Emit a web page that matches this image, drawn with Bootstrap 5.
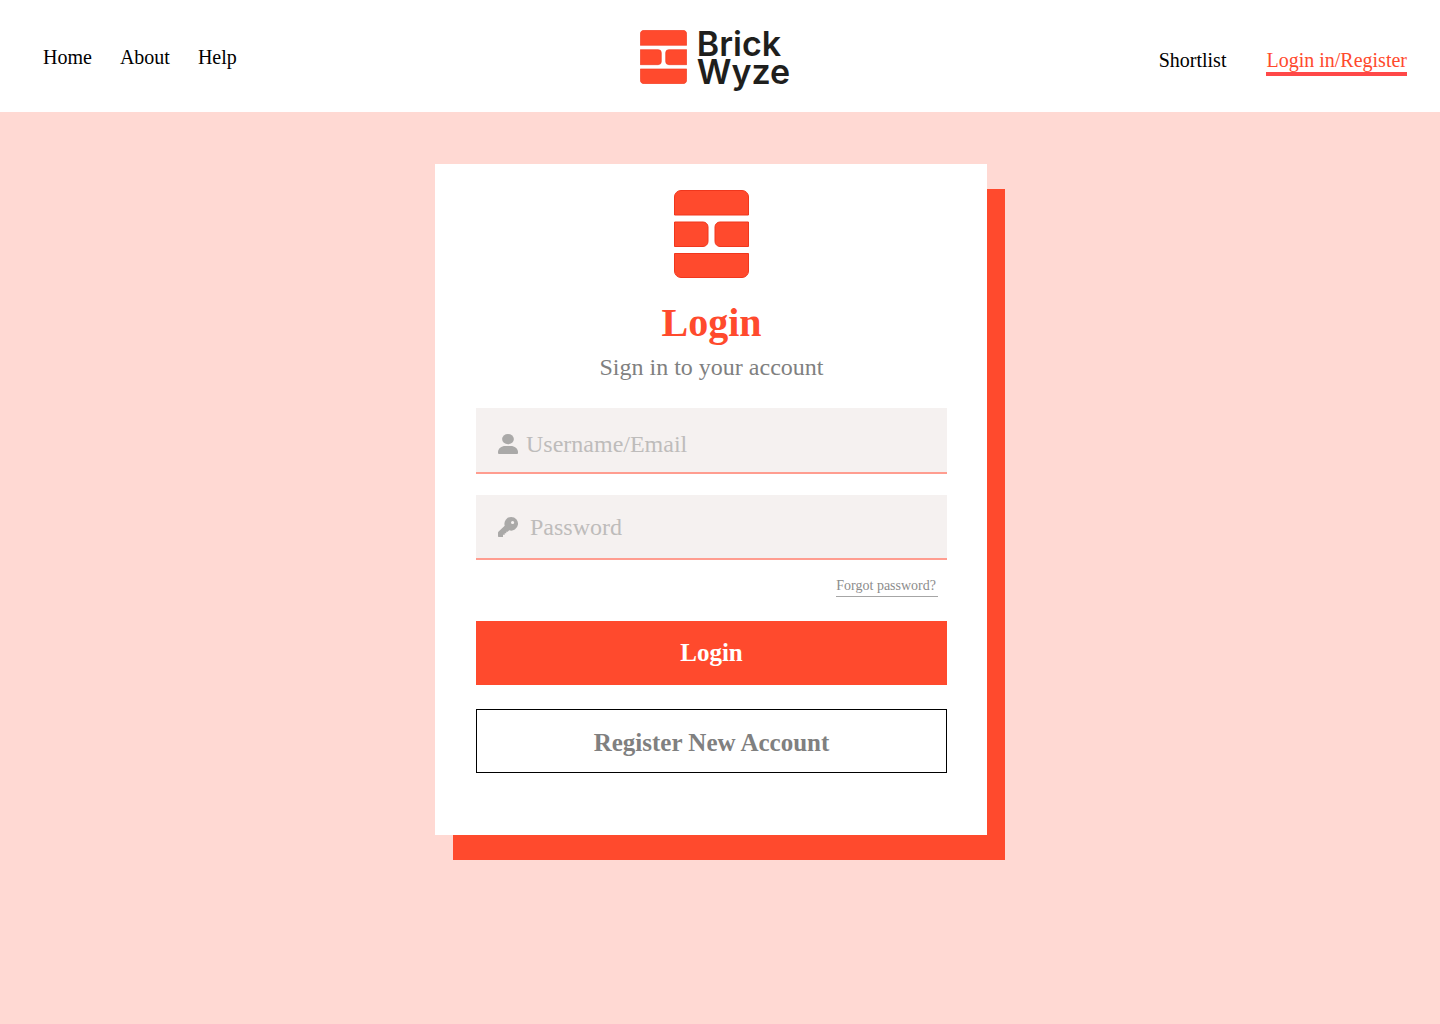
<!DOCTYPE html>
<html lang="en">
<head>
<meta charset="utf-8">
<meta name="viewport" content="width=device-width, initial-scale=1">
<title>Brick Wyze - Login</title>
<link href="https://cdn.jsdelivr.net/npm/bootstrap@5.3.0/dist/css/bootstrap.min.css" rel="stylesheet">
<style>
  :root { --brick: #ff4a2d; --blush: #ffd9d3; }
  body { background: var(--blush); font-family: "Liberation Serif", serif; }
  .site-header { display: grid; grid-template-columns: 1fr auto 1fr; min-height: 112px; padding: 0 33px; }
  .site-header nav a { color: #000; font-size: 20px; line-height: 24px; text-decoration: none; }
  .main-nav { gap: 28px; padding: 45px 0 0 10px; }
  .account-nav { gap: 40px; padding-top: 48px; }
  .site-header nav a.current { color: var(--brick); border-bottom: 4px solid #ff4848; }
  .brand { gap: 10px; margin: 30px 10px 0 0; color: #1f1f1d; font: 600 34px/28px Inter, sans-serif; text-decoration: none; }
  .brand svg { width: 47px; height: 54px; }
  .login-wrap { max-width: 570px; padding-right: 18px; margin-top: 52px; margin-bottom: 60px; }
  .login-card { background: #fff; padding: 26px 40px 62px 41px; box-shadow: 18px 25px 0 var(--brick); }
  .login-mark { width: 75px; height: 88px; }
  .login-title { color: var(--brick); font-size: 40px; line-height: 48px; font-weight: 700; margin: 21px 0 5px; }
  .subtitle { color: #808080; font-size: 24px; line-height: 30px; margin-bottom: 26px; }
  .field { background: #f5f1f0; border-bottom: 2px solid #ff9d90; height: 66px; padding: 0 22px; color: #aaa9a8; }
  .field + .field { margin-top: 21px; height: 65px; }
  .field svg { width: 20px; height: 20px; flex: none; }
  .field input { background: none; border: 0; outline: 0; color: #555; font-size: 24px; line-height: 30px; min-width: 0; padding: 0 8px; }
  .field input::placeholder { color: #bebcbb; opacity: 1; }
  .field.user-field { padding-top: 8px; }
  .forgot { color: #8c8c8c; font-size: 14px; line-height: 18px; padding: 0 2px 1px 0; margin: 17px 9px 24px 0; border-bottom: 1px solid #a6a6a6; text-decoration: none; }
  .login-card .btn { border-radius: 0; font-size: 25px; line-height: 30px; font-weight: 700; height: 64px; }
  .login-card .btn-brick, .login-card .btn-brick:hover { background: var(--brick); color: #fff; border: 0; }
  .login-card .btn-register, .login-card .btn-register:hover { background: #fff; color: #808080; border: 1px solid #000; margin-top: 24px; padding-top: 9px; }
</style>
<script src="https://cdn.jsdelivr.net/npm/bootstrap@5.3.0/dist/js/bootstrap.bundle.min.js" defer></script>
</head>
<body>
<svg class="d-none" aria-hidden="true">
  <symbol id="bricks" viewBox="0 0 75 88" preserveAspectRatio="none">
    <g fill="#ff4a2d" stroke="#f0371d" stroke-width="1">
      <path d="M.5 25V7a6.500 6.500 0 0 1 6.500-6.500h61A6.500 6.500 0 0 1 74.500 7v18z"/>
      <path d="M.5 32h28.500a5 5 0 0 1 5 5v14.500a5 5 0 0 1-5 5H.5z"/>
      <path d="M74.500 32H46a5 5 0 0 0-5 5v14.500a5 5 0 0 0 5 5h28.500z"/>
      <path d="M.5 63.500h74V81a6.500 6.500 0 0 1-6.500 6.500H7A6.500 6.500 0 0 1 .5 81z"/>
    </g>
  </symbol>
</svg>
<header class="site-header bg-white">
  <nav class="main-nav d-flex align-items-start" aria-label="Main">
    <a href="#">Home</a><a href="#">About</a><a href="#">Help</a>
  </nav>
  <a class="brand d-flex align-items-start" href="#">
    <svg aria-hidden="true"><use href="#bricks"/></svg>
    <span>Brick<br>Wyze</span>
  </a>
  <nav class="account-nav d-flex align-items-start justify-content-end" aria-label="Account">
    <a href="#">Shortlist</a><a class="current" href="#" aria-current="page">Login in/Register</a>
  </nav>
</header>
<main class="login-wrap mx-auto">
  <form class="login-card d-flex flex-column text-center">
    <svg class="login-mark align-self-center" aria-hidden="true"><use href="#bricks"/></svg>
    <h1 class="login-title">Login</h1>
    <p class="subtitle">Sign in to your account</p>
    <div class="field user-field d-flex align-items-center">
      <label class="d-flex" for="user" aria-label="Username or email">
        <svg viewBox="0 0 20 20" fill="currentColor" aria-hidden="true"><ellipse cx="10" cy="5.100" rx="5.900" ry="5.100"/><path d="M0 19v-.8C0 14.500 3.500 12 7.200 12h5.600c3.700 0 7.200 2.500 7.200 6.200v.8q0 1-1 1H1q-1 0-1-1z"/></svg>
      </label>
      <input class="flex-grow-1" id="user" type="text" placeholder="Username/Email" autocomplete="username">
    </div>
    <div class="field d-flex align-items-center">
      <label class="d-flex" for="pass" aria-label="Password">
        <svg viewBox="0 0 20 20" fill="currentColor" aria-hidden="true"><path fill-rule="evenodd" d="M13.200 0a6.800 6.800 0 1 1-2 13.300L9.700 14.800H8.300v1.400H6.700v1.500H5V20H.7Q0 20 0 19.300v-3.500q0-.6.4-1L6.700 8.700A6.800 6.800 0 0 1 13.200 0zM14.600 3.900a1.600 1.600 0 1 0 0 3.200 1.600 1.600 0 0 0 0-3.200z"/></svg>
      </label>
      <input class="flex-grow-1 ms-1" id="pass" type="password" placeholder="Password" autocomplete="current-password">
    </div>
    <a class="forgot align-self-end" href="#">Forgot password?</a>
    <button class="btn btn-brick w-100" type="submit">Login</button>
    <button class="btn btn-register w-100" type="button">Register New Account</button>
  </form>
</main>
</body>
</html>
